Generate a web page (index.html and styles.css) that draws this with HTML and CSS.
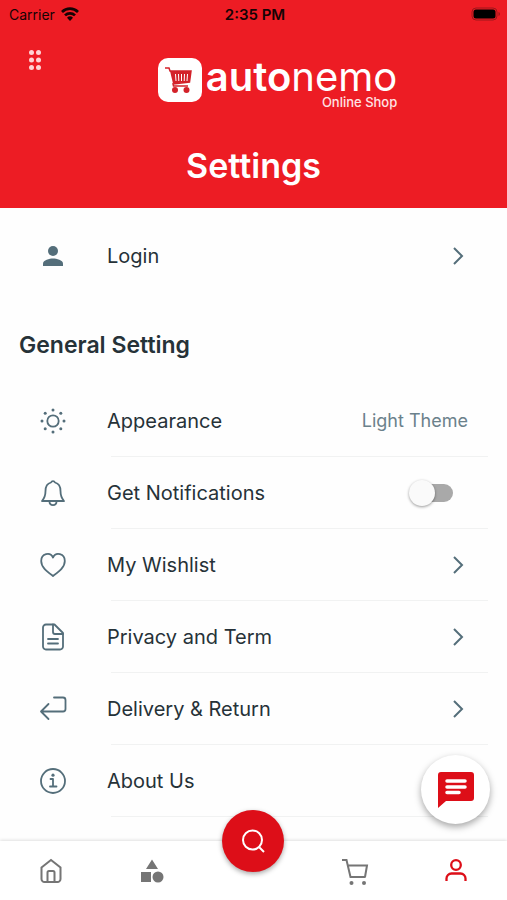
FILE: index.html
```
<!DOCTYPE html>
<html lang="en">
  <head>
    <meta charset="UTF-8" />
    <meta name="viewport" content="width=device-width, initial-scale=1.0" />
    <title>Settings</title>
    <link rel="stylesheet" href="styles.css">
  </head>
  <body>
    <header class="header">
      <div class="status-bar">
        <span class="carrier">
          Carrier
          <svg width="18" height="14" viewBox="0 0 18 14" aria-hidden="true">
            <g fill="none" stroke="#150304" stroke-width="2.7">
              <path d="M1 5a11.4 11.4 0 0 1 16 0" />
              <path d="M4 8.400a7.200 7.200 0 0 1 10 0" />
            </g>
            <path d="M9 14l-3-3.200a4.300 4.300 0 0 1 6 0z" fill="#150304" />
          </svg>
        </span>
        <span class="time">2:35 PM</span>
        <svg class="battery" width="30" height="14" viewBox="0 0 30 14" aria-hidden="true">
          <rect x="1" y="1" width="25" height="12" rx="4" fill="none" stroke="#9d161a" />
          <rect x="2.500" y="2.500" width="22" height="9" rx="2.500" fill="#000" />
          <path d="M27.500 5v4q1.500-.5 1.500-2t-1.500-2z" fill="#9d161a" />
        </svg>
      </div>
      <div class="brand-bar">
        <button class="menu-btn" aria-label="Menu">
          <svg width="14" height="20" viewBox="0 0 14 20" fill="#ffd3d4">
            <circle cx="3.500" cy="2.500" r="2.500" /><circle cx="10.500" cy="2.500" r="2.500" />
            <circle cx="3.500" cy="10" r="2.500" /><circle cx="10.500" cy="10" r="2.500" />
            <circle cx="3.500" cy="17.500" r="2.500" /><circle cx="10.500" cy="17.500" r="2.500" />
          </svg>
        </button>
        <a class="logo" href="#">
          <svg width="44" height="44" viewBox="0 0 44 44" aria-hidden="true">
            <rect width="44" height="44" rx="10" fill="#fff" />
            <path d="M7 10h4l1 3h21l-1.500 11L15 26l.5 2H30" fill="none" stroke="#d3222a" stroke-width="1.500" />
            <path d="M12 13h21l-1.500 11L15 25.500z" fill="#d3222a" />
            <path d="M17.500 16l.5 7M20.500 16l.3 7M23.500 16v7M26.500 16l-.3 7M29.500 16l-.5 7" stroke="#fff" stroke-width="1" />
            <circle cx="17" cy="32" r="3" fill="#d3222a" /><circle cx="28.500" cy="32" r="3" fill="#d3222a" />
          </svg>
          <span class="logo-text">
            <span class="logo-name"><b>auto</b>nemo</span>
            <span class="logo-tag">Online Shop</span>
          </span>
        </a>
      </div>
      <h1>Settings</h1>
    </header>

    <main>
      <a class="row" href="#">
        <svg class="icon" viewBox="0 0 28 28">
          <circle cx="14" cy="9" r="5" fill="#546e7a" />
          <path d="M4 24v-2.500c0-3.300 6.500-5 10-5s10 1.700 10 5V24z" fill="#546e7a" />
        </svg>
        <span class="label">Login</span>
        <svg class="chevron" viewBox="0 0 20 20"><path d="M6 2l8 8-8 8" /></svg>
      </a>

      <h2>General Setting</h2>

      <ul class="list">
        <li>
          <a class="row" href="#">
            <svg class="icon" viewBox="0 0 28 28">
              <circle cx="14" cy="14" r="5.700" />
              <g fill="#546e7a" stroke="none">
                <circle cx="14" cy="3" r="1.500" /><circle cx="14" cy="25" r="1.500" />
                <circle cx="3" cy="14" r="1.500" /><circle cx="25" cy="14" r="1.500" />
                <circle cx="6.200" cy="6.200" r="1.500" /><circle cx="21.800" cy="6.200" r="1.500" />
                <circle cx="6.200" cy="21.800" r="1.500" /><circle cx="21.800" cy="21.800" r="1.500" />
              </g>
            </svg>
            <span class="label">Appearance</span>
            <span class="value">Light Theme</span>
          </a>
        </li>
        <li>
          <div class="row">
            <svg class="icon" viewBox="0 0 28 28">
              <path d="M12 3.500a2.200 2.200 0 0 1 4 0c4 1 5.500 4.500 5.500 8.500 0 5 .8 7 3.500 10H3c2.700-3 3.500-5 3.500-10 0-4 1.500-7.500 5.500-8.500z" />
              <path d="M10.500 22.500c0 4.700 7 4.700 7 0" />
            </svg>
            <label class="label" for="notifications">Get Notifications</label>
            <input class="switch" type="checkbox" id="notifications" />
          </div>
        </li>
        <li>
          <a class="row" href="#">
            <svg class="icon" viewBox="0 0 28 28">
              <path d="M14 25C8 20.500 2.200 16.500 2.200 10c0-7.500 9-9.500 11.800-3.500C16.800.5 25.800 2.500 25.800 10c0 6.500-5.800 10.500-11.800 15z" />
            </svg>
            <span class="label">My Wishlist</span>
            <svg class="chevron" viewBox="0 0 20 20"><path d="M6 2l8 8-8 8" /></svg>
          </a>
        </li>
        <li>
          <a class="row" href="#">
            <svg class="icon" viewBox="0 0 28 28">
              <path d="M7 1.500h8.500L24 10v13.500a3 3 0 0 1-3 3H7a3 3 0 0 1-3-3v-19a3 3 0 0 1 3-3z" />
              <path d="M14 1.500v7.500a2 2 0 0 0 2 2h8M9 16h10M9 20.500h10" />
            </svg>
            <span class="label">Privacy and Term</span>
            <svg class="chevron" viewBox="0 0 20 20"><path d="M6 2l8 8-8 8" /></svg>
          </a>
        </li>
        <li>
          <a class="row" href="#">
            <svg class="icon" viewBox="0 0 28 28">
              <path d="M15 2.500h9a2.500 2.500 0 0 1 2.500 2.500v9a2.500 2.500 0 0 1-2.500 2.500H2M9.500 9L2 16.500 9.500 24" />
            </svg>
            <span class="label">Delivery &amp; Return</span>
            <svg class="chevron" viewBox="0 0 20 20"><path d="M6 2l8 8-8 8" /></svg>
          </a>
        </li>
        <li>
          <a class="row" href="#">
            <svg class="icon" viewBox="0 0 28 28">
              <circle cx="14" cy="14" r="12" />
              <path d="M11.500 12H14v7.500M11 19.500h6.500" />
              <circle cx="14" cy="8.200" r="1.600" fill="#546e7a" stroke="none" />
            </svg>
            <span class="label">About Us</span>
          </a>
        </li>
      </ul>
    </main>

    <button class="chat-btn" aria-label="Chat">
      <svg width="36" height="36" viewBox="0 0 36 36">
        <path d="M3 0h30a3 3 0 0 1 3 3v23a3 3 0 0 1-3 3H8l-8 7V3a3 3 0 0 1 3-3z" fill="#dd0e18" />
        <path d="M9 9h18M9 15h18M9 20.500h12" stroke="#fff" stroke-width="3.500" stroke-linecap="round" />
      </svg>
    </button>

    <nav class="tab-bar">
      <a href="#" aria-label="Home">
        <svg viewBox="0 0 28 28">
          <path d="M4.500 10.500L14 3l9.500 7.500V22a3 3 0 0 1-3 3h-13a3 3 0 0 1-3-3z" />
          <path d="M10.500 25V15.500a1.500 1.500 0 0 1 1.500-1.500h4a1.500 1.500 0 0 1 1.500 1.500V25" />
        </svg>
      </a>
      <a href="#" aria-label="Categories">
        <svg viewBox="0 0 28 28">
          <path d="M14 2.500l6 9.500H8zM3 15h10v10H3z" fill="#757575" stroke="none" />
          <circle cx="20" cy="20" r="5.500" fill="#757575" stroke="none" />
        </svg>
      </a>
      <button class="search-btn" aria-label="Search">
        <svg viewBox="0 0 28 28">
          <circle cx="13.500" cy="13" r="9.500" /><path d="M20 20l5 5" />
        </svg>
      </button>
      <a href="#" aria-label="Cart">
        <svg viewBox="0 0 28 28">
          <path d="M1 3h4.500l4 17h15M6.500 8.500H26l-2 11.500" />
          <circle cx="10.500" cy="26" r="2" fill="#757575" stroke="none" />
          <circle cx="23" cy="26" r="2" fill="#757575" stroke="none" />
        </svg>
      </a>
      <a class="active" href="#" aria-label="Account">
        <svg viewBox="0 0 28 28">
          <circle cx="14" cy="8" r="4.800" />
          <path d="M4.500 24v-2.500a5 5 0 0 1 5-5h9a5 5 0 0 1 5 5V24" />
        </svg>
      </a>
    </nav>
  </body>
</html>
```

FILE: styles.css
```
* {
  box-sizing: border-box;
}

body {
  display: flex;
  flex-direction: column;
  min-height: 100vh;
  margin: 0;
  background-color: #fefefe;
  color: #263238;
  font-family: Inter, "Open Sans", sans-serif;
}

a {
  color: inherit;
  text-decoration: none;
}

button {
  padding: 0;
  border: none;
  cursor: pointer;
}

svg {
  display: block;
  flex: none;
}

/* header */
.header {
  padding-bottom: 18px;
  background-color: #ed1c24;
  color: #fff;
}

.status-bar {
  display: grid;
  grid-template-columns: 1fr auto 1fr;
  align-items: center;
  height: 28px;
  padding: 0 6px 0 9px;
  color: #150304;
  font-size: 14px;
}

.carrier {
  display: flex;
  gap: 6px;
  align-items: center;
}

.time {
  font-size: 15px;
  font-weight: 600;
}

.battery {
  justify-self: end;
}

.brand-bar {
  display: grid;
  grid-template-columns: 1fr auto 1fr;
  height: 114px;
  padding: 22px 0 0 28px;
}

.menu-btn {
  justify-self: start;
  align-self: start;
  background: none;
}

.logo {
  display: flex;
  gap: 4px;
  margin-left: 20px;
  padding-top: 8px;
}

.logo-text {
  display: flex;
  flex-direction: column;
  align-items: flex-end;
  padding-top: 1px;
}

.logo-name {
  font-size: 40px;
  line-height: 36px;
}

.logo-name b {
  font-weight: 600;
}

.logo-tag {
  color: #ffe3e4;
  font-size: 13px;
  font-weight: 500;
  line-height: 14px;
}

h1 {
  margin: 0;
  font-size: 34px;
  font-weight: 600;
  line-height: 48px;
  text-align: center;
}

/* settings list */
main {
  flex: 1;
  padding: 12px 0 20px;
}

h2 {
  margin: 38px 19px 24px;
  font-size: 23px;
  font-weight: 600;
  line-height: 32px;
}

.list {
  margin: 0;
  padding: 0;
  list-style: none;
}

.list li::after {
  content: "";
  display: block;
  height: 1px;
  margin: 0 19px 0 111px;
  background-color: #f1f2f2;
}

.row {
  display: flex;
  align-items: center;
  height: 71px;
  padding: 0 39px;
}

.icon {
  width: 28px;
  height: 28px;
  fill: none;
  stroke: #546e7a;
  stroke-width: 1.8;
  stroke-linecap: round;
  stroke-linejoin: round;
}

.row .icon [fill] {
  stroke: none;
}

.label {
  flex: 1;
  padding-left: 40px;
  font-size: 20px;
}

.value {
  color: #6b818b;
  font-size: 18px;
}

.chevron {
  width: 20px;
  height: 20px;
  fill: none;
  stroke: #546e7a;
  stroke-width: 2;
}

.switch {
  display: flex;
  align-items: center;
  appearance: none;
  width: 36px;
  height: 18px;
  margin: 0 15px 0 0;
  border-radius: 9px;
  background-color: #a9a9a9;
  cursor: pointer;
}

.switch::before {
  content: "";
  flex: none;
  width: 26px;
  height: 26px;
  margin-left: -8px;
  border-radius: 50%;
  background-color: #fafafa;
  box-shadow: 0 1px 3px rgba(0, 0, 0, 0.4);
}

.switch:checked::before {
  margin-left: 18px;
}

/* floating chat */
.chat-btn {
  position: fixed;
  right: 17px;
  bottom: 76px;
  z-index: 2;
  display: grid;
  place-items: center;
  width: 69px;
  height: 69px;
  border-radius: 50%;
  background-color: #fff;
  box-shadow: 0 3px 7px rgba(0, 0, 0, 0.35);
}

/* bottom tabs */
.tab-bar {
  position: sticky;
  bottom: 0;
  display: grid;
  grid-template-columns: repeat(5, 1fr);
  justify-items: center;
  align-items: center;
  height: 59px;
  background-color: #fff;
  box-shadow: 0 -1px 3px rgba(0, 0, 0, 0.12);
}

.tab-bar svg {
  width: 28px;
  height: 28px;
  fill: none;
  stroke: #757575;
  stroke-width: 2;
}

.tab-bar .active svg {
  stroke: #dd0e18;
  stroke-width: 2.3;
}

.search-btn {
  display: grid;
  place-items: center;
  width: 62px;
  height: 62px;
  margin-top: -60px;
  border-radius: 50%;
  background-color: #dd0e18;
  box-shadow: 0 2px 5px rgba(0, 0, 0, 0.35);
}

.tab-bar .search-btn svg {
  stroke: #fff;
}
```
